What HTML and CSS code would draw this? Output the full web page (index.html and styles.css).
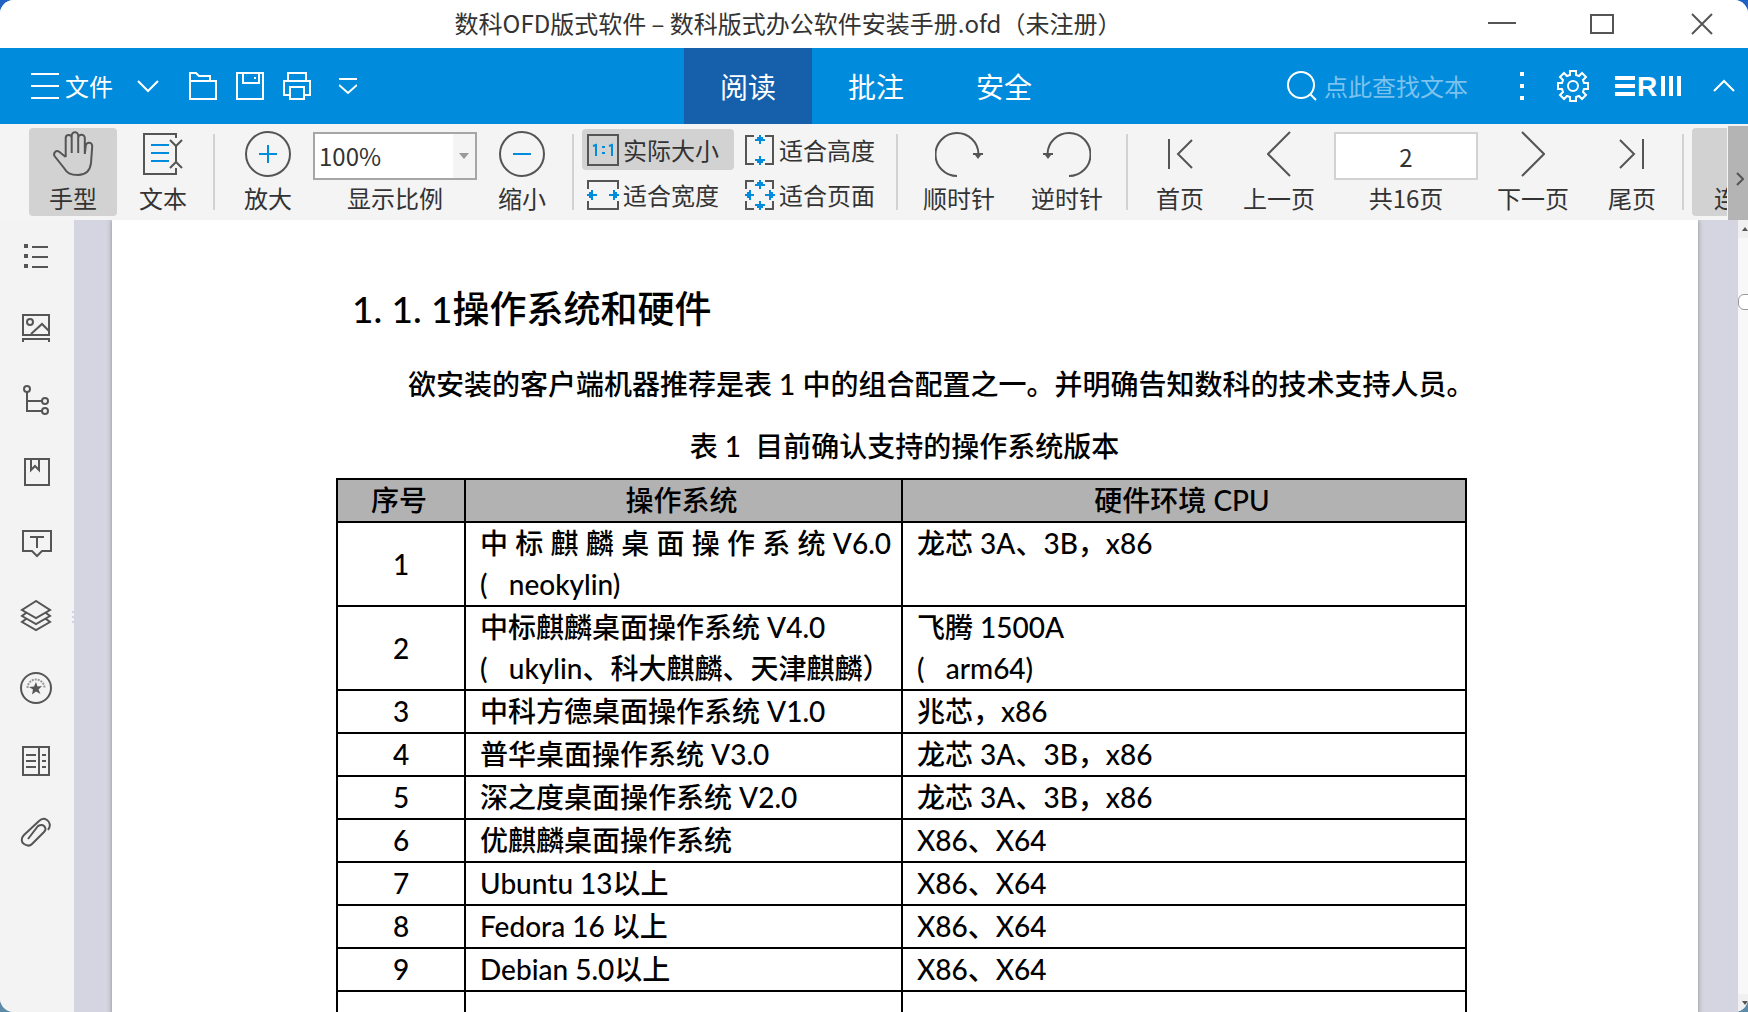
FILE: index.html
```html
<!DOCTYPE html>
<html lang="zh-CN">
<head>
<meta charset="utf-8">
<meta name="viewport" content="width=device-width, initial-scale=1">
<title>数科OFD版式软件</title>
<link rel="stylesheet" href="styles.css">
</head>
<body>
<div class="app">
  <header class="titlebar">
    <h1 class="window-title">数科OFD版式软件 – 数科版式办公软件安装手册.ofd（未注册）</h1>
    <div class="window-controls">
      <button class="icon-button" aria-label="最小化"><svg width="28" height="28"><path d="M0 13h28"/></svg></button>
      <button class="icon-button" aria-label="最大化"><svg width="28" height="28"><rect x="3" y="5" width="22" height="18"/></svg></button>
      <button class="icon-button" aria-label="关闭"><svg width="28" height="28"><path d="M4 4l20 20M24 4L4 24"/></svg></button>
    </div>
  </header>

  <nav class="menubar">
    <div class="quick">
      <button class="file-menu"><svg width="28" height="28"><path d="M0 2h28M0 14h28M0 26h28"/></svg>文件<svg class="file-chevron" width="22" height="14"><path d="M1 2l10 10L21 2"/></svg></button>
      <button class="icon-button" aria-label="打开"><svg width="28" height="28"><path d="M1 9V1h6l3 3h11v5M1 9h26v18H1z"/></svg></button>
      <button class="icon-button" aria-label="保存"><svg width="28" height="28"><path d="M1 1h26v26H1zM7 1v10h16V1M18 6h2"/></svg></button>
      <button class="icon-button" aria-label="打印"><svg width="28" height="28"><path d="M5 9V1h18v8M7 23H1V9h26v14h-6M7 15h14v12H7z"/></svg></button>
      <button class="icon-button more" aria-label="更多"><svg width="18" height="20"><path d="M0 3h18M0 9l9 8 9-8"/></svg></button>
    </div>
    <div class="tabs">
      <button class="tab tab-active">阅读</button>
      <button class="tab">批注</button>
      <button class="tab">安全</button>
    </div>
    <div class="menu-end">
      <label class="search"><svg width="32" height="32"><circle cx="15" cy="15" r="13"/><path d="M24 24l6 6"/></svg><input class="search-input" type="text" placeholder="点此查找文本" aria-label="点此查找文本"></label>
      <button class="icon-button dots" aria-label="菜单"><svg width="4" height="28"><path class="fill" d="M0 0h4v4H0zM0 12h4v4H0zM0 24h4v4H0z"/></svg></button>
      <button class="icon-button gear" aria-label="设置"><svg width="32" height="32"><path d="M13 1h6v4l3 1 3-3 4 4-3 3 1 3h4v6h-4l-1 3 3 3-4 4-3-3-3 1v4h-6v-4l-3-1-3 3-4-4 3-3-1-3H1v-6h4l1-3-3-3 4-4 3 3 3-1z"/><circle cx="16" cy="16" r="5"/></svg></button>
      <svg class="brand" width="66" height="20"><path class="fill" d="M0 0h20v4H0zM0 8h20v4H0zM0 16h20v4H0zM46 0h4v20h-4zM54 0h4v20h-4zM62 0h4v20h-4z"/><text class="brand-letter" x="22" y="20">R</text></svg>
      <button class="icon-button collapse" aria-label="折叠"><svg width="22" height="14"><path d="M1 12L11 2l10 10"/></svg></button>
    </div>
  </nav>

  <div class="ribbon">
    <div class="ribbon-body">
      <div class="group">
        <button class="tool tool-active"><span class="tool-icon"><svg width="44" height="48"><path d="M14.7 27V8a3 3 0 0 1 6 0v15M20.7 8V5.500a3.200 3.200 0 0 1 6.500 0V23M27.200 8a3.300 3.300 0 0 1 6.600 0v16M33.800 24l1-8.500a3.200 3.200 0 0 1 6.400 1L40 33c-1 8-6 12-13 12-8 0-11-2-14-7L3.500 26c-1.500-3 1.500-6.500 5-4l6.200 5"/></svg></span>手型</button>
        <button class="tool"><span class="tool-icon"><svg width="40" height="44"><path d="M33 6V2H1v40h32v-6M27 8l6 6 6-6M33 14v16M27 36l6-6 6 6"/><path class="accent" d="M8 13h18M8 21h18M8 29h18"/></svg></span>文本</button>
      </div>
      <span class="sep"></span>
      <div class="group group-zoom">
        <button class="tool"><span class="tool-icon"><svg width="46" height="46"><circle cx="23" cy="23" r="22"/><path class="accent" d="M14 23h18M23 14v18"/></svg></span>放大</button>
        <div class="field">
          <div class="combo"><input id="scale" class="combo-input" type="text" value="100%"><button class="combo-button" aria-label="选择比例"><svg width="10" height="6"><path class="fill" d="M0 0h10L5 6z"/></svg></button></div>
          <label for="scale">显示比例</label>
        </div>
        <button class="tool"><span class="tool-icon"><svg width="46" height="46"><circle cx="23" cy="23" r="22"/><path class="accent" d="M14 23h18"/></svg></span>缩小</button>
      </div>
      <span class="sep"></span>
      <div class="fit">
        <button class="fit-button tool-active"><svg width="32" height="32"><rect x="1" y="1" width="30" height="30"/><path class="accent" d="M6 12l3-1v11M22 12l3-1v11M15 13h3M15 19h3"/></svg>实际大小</button>
        <button class="fit-button"><svg width="32" height="32"><path d="M11 2H3v28h8M22 2h8v28h-8"/><path class="accent" d="M17 1v9M17 22v9M12 6h10M12 26h10M14 4h6M14 28h6"/></svg>适合高度</button>
        <button class="fit-button"><svg width="32" height="32"><path d="M1 10V2h30v8M1 22v8h30v-8"/><path class="accent" d="M0 16h10M22 16h10M5 11v10M27 11v10M3 13v6M29 13v6"/></svg>适合宽度</button>
        <button class="fit-button"><svg width="32" height="32"><path d="M11 2H3v8M22 2h8v8M3 22v8h8M30 22v8h-8"/><path class="accent" d="M17 1v9M17 22v9M12 6h10M12 26h10M14 4h6M14 28h6M2 16h9M22 16h10M7 11v10M27 11v10M5 13v6M29 13v6"/></svg>适合页面</button>
      </div>
      <span class="sep"></span>
      <div class="group">
        <button class="tool tool-wide"><span class="tool-icon"><svg width="48" height="46"><path d="M22 45A21.500 21.500 0 1 1 43.500 23"/><path class="fill" d="M38 22h10v2h-2l-3 4-3-4h-2z"/></svg></span>顺时针</button>
        <button class="tool tool-wide"><span class="tool-icon"><svg width="48" height="46"><path d="M26 45A21.500 21.500 0 1 0 4.500 23"/><path class="fill" d="M0 22h10v2H8l-3 4-3-4H0z"/></svg></span>逆时针</button>
      </div>
      <span class="sep"></span>
      <div class="group group-pages">
        <button class="tool"><span class="tool-icon"><svg width="26" height="32"><path d="M2 1v30M25 2L11 16l14 14"/></svg></span>首页</button>
        <button class="tool"><span class="tool-icon"><svg width="24" height="46"><path d="M23 1L1 23l22 22"/></svg></span>上一页</button>
        <div class="field">
          <input id="page" class="page-input" type="text" value="2">
          <label for="page">共16页</label>
        </div>
        <button class="tool"><span class="tool-icon"><svg width="24" height="46"><path d="M1 1l22 22L1 45"/></svg></span>下一页</button>
        <button class="tool"><span class="tool-icon"><svg width="26" height="32"><path d="M24 1v30M1 2l14 14L1 30"/></svg></span>尾页</button>
      </div>
      <span class="sep"></span>
      <button class="tool tool-active tool-last"><span class="tool-icon"></span>连续页</button>
    </div>
    <button class="ribbon-next" aria-label="更多工具"><svg width="8" height="14"><path d="M1 1l6 6-6 6"/></svg></button>
  </div>

  <div class="workspace">
    <aside class="sidebar">
      <button class="side-button" aria-label="大纲"><svg width="32" height="32"><path class="fill" d="M4 4h4v4H4zM4 14h4v4H4zM4 24h4v4H4z"/><path d="M12 7h16M12 17h16M12 27h16"/></svg></button>
      <button class="side-button" aria-label="缩略图"><svg width="32" height="32"><path d="M3 3h26v20H3zM3 30v-3h26v3M11 22l11-10 7 7"/><circle cx="10" cy="10" r="3"/></svg></button>
      <button class="side-button" aria-label="结构"><svg width="32" height="32"><circle cx="7" cy="5" r="3"/><circle cx="25" cy="17" r="3"/><circle cx="25" cy="27" r="3"/><path d="M7 8v19h15M7 17h15"/></svg></button>
      <button class="side-button" aria-label="书签"><svg width="32" height="32"><path d="M5 3h24v26H5zM11 3v11l4-4 4 4V3"/></svg></button>
      <button class="side-button" aria-label="批注"><svg width="32" height="32"><path d="M3 3h28v20h-9l-5 5-5-5H3zM10 9h14M17 9v11"/></svg></button>
      <button class="side-button" aria-label="图层"><svg width="32" height="32"><path d="M16 1L2 10l14 8 14-8zM6 13l-4 3 14 8 14-8-4-3M6 19l-4 3 14 8 14-8-4-3"/></svg></button>
      <button class="side-button" aria-label="签章"><svg width="32" height="32"><circle cx="16" cy="16" r="15"/><path class="fill" d="M16 10l1.500 4.500 4.500-.5-3.500 3.500 2 4.500-4.500-2.500-4 3 1-5-4-2.500 5-.5z"/><path class="seal" d="M7.500 16a8.500 8.500 0 0 1 17 0"/></svg></button>
      <button class="side-button" aria-label="目录"><svg width="32" height="32"><path d="M3 3h26v28H3zM19 3v28M6 11h10M6 17h10M6 23h10M22 11h4M22 17h4M22 23h4"/></svg></button>
      <button class="side-button" aria-label="附件"><svg width="32" height="32"><path d="M28 14c3-4 2-8-1-10s-6-1-8 1L4 19c-3 3-3 7 0 9s6 2 8 0l12-12c2-2 2-4 0-6s-4-1-6 0L8 23"/></svg></button>
      <svg class="splitter" width="2" height="12"><path d="M0 1h2M0 6h2M0 11h2"/></svg>
    </aside>
    <main class="canvas">
      <article class="page">
        <h2 class="heading">1. 1. 1操作系统和硬件</h2>
        <p class="para">欲安装的客户端机器推荐是表 1 中的组合配置之一。并明确告知数科的技术支持人员。</p>
        <table class="systems">
          <caption>表 1&nbsp; 目前确认支持的操作系统版本</caption>
          <colgroup><col class="col-no"><col class="col-os"><col></colgroup>
          <thead><tr><th>序号</th><th>操作系统</th><th>硬件环境 CPU</th></tr></thead>
          <tbody>
            <tr class="thin"><td>1</td><td><div class="spread">中 标 麒 麟 桌 面 操 作 系 统 V6.0</div>(&nbsp;&nbsp; neokylin)</td><td>龙芯 3A、3B，x86</td></tr>
            <tr class="thin"><td>2</td><td>中标麒麟桌面操作系统 V4.0<br>(&nbsp;&nbsp; ukylin、科大麒麟、天津麒麟）</td><td>飞腾 1500A<br>(&nbsp;&nbsp; arm64)</td></tr>
            <tr class="thin"><td>3</td><td>中科方德桌面操作系统 V1.0</td><td>兆芯，x86</td></tr>
            <tr><td>4</td><td>普华桌面操作系统 V3.0</td><td>龙芯 3A、3B，x86</td></tr>
            <tr><td>5</td><td>深之度桌面操作系统 V2.0</td><td>龙芯 3A、3B，x86</td></tr>
            <tr><td>6</td><td>优麒麟桌面操作系统</td><td>X86、X64</td></tr>
            <tr><td>7</td><td>Ubuntu 13以上</td><td>X86、X64</td></tr>
            <tr><td>8</td><td>Fedora 16 以上</td><td>X86、X64</td></tr>
            <tr><td>9</td><td>Debian 5.0以上</td><td>X86、X64</td></tr>
            <tr><td></td><td></td><td></td></tr>
          </tbody>
        </table>
      </article>
    </main>
    <div class="scrollbar">
      <button class="scroll-end" aria-label="向上"><svg width="6" height="4"><path class="fill" d="M0 4h6L3 0z"/></svg></button>
      <div class="scroll-track"><div class="scroll-thumb"></div></div>
      <button class="scroll-end" aria-label="向下"><svg width="6" height="4"><path class="fill" d="M0 0h6L3 4z"/></svg></button>
    </div>
  </div>
</div>
</body>
</html>
```

FILE: styles.css
```css
* { box-sizing: border-box; }

body {
  margin: 0;
  background: linear-gradient(#1f62c4, #5b8ba8);
  color: #333;
  font: 24px/36px "Noto Sans CJK SC", sans-serif;
}

button {
  padding: 0;
  border: 0;
  background: none;
  color: inherit;
  font: inherit;
  white-space: nowrap;
}

input {
  min-width: 0;
  border: 0;
  outline: 0;
  padding: 0;
  background: none;
  color: inherit;
  font: inherit;
}

svg {
  display: block;
  flex: none;
  fill: none;
  stroke: #555;
  stroke-width: 2;
}

.fill { fill: #555; stroke: none; }
.accent { stroke: #008bdc; }

.icon-button {
  display: flex;
  align-items: center;
  justify-content: center;
}

.app {
  display: flex;
  flex-direction: column;
  height: 100vh;
  overflow: hidden;
  border-radius: 14px;
  background: #f4f4f4;
}

/* Title bar */
.titlebar {
  display: grid;
  grid-template-columns: 1fr auto;
  flex: none;
  align-items: center;
  height: 48px;
  padding: 0 32px 0 88px;
  background: #fff;
}

.window-title {
  margin: 0;
  padding-bottom: 2px;
  font-size: 24px;
  font-weight: 400;
  text-align: center;
}

.window-controls {
  display: flex;
  justify-content: flex-end;
  gap: 72px;
}

/* Blue menu bar */
.menubar {
  display: grid;
  grid-template-columns: 1fr auto 1fr;
  flex: none;
  height: 76px;
  padding-left: 4px;
  background: #008bdc;
  color: #fff;
}

.menubar svg { stroke: #fff; }
.menubar .fill { fill: #fff; stroke: none; }

.quick {
  display: flex;
  align-items: center;
  gap: 19px;
  padding-left: 27px;
}

.file-menu {
  display: flex;
  align-items: center;
  gap: 6px;
  margin-right: 11px;
}

.file-chevron { margin-left: 18px; }
.more { margin-left: 9px; }

.tabs { display: flex; }
.tab { width: 128px; font-size: 28px; }
.tab-active { background: #1660ab; }

.menu-end {
  display: flex;
  align-items: center;
  justify-content: flex-end;
  padding-right: 13px;
}

.search { display: flex; align-items: center; gap: 6px; }
.search-input { width: 160px; }
.search-input::placeholder { color: #7cc2ee; opacity: 1; }
.dots { margin-left: 36px; }
.gear { margin-left: 33px; }
.brand { margin-left: 26px; overflow: visible; }
.brand-letter { fill: #fff; stroke: none; font: bold 28px "Liberation Sans", sans-serif; }
.collapse { margin-left: 32px; }

/* Ribbon */
.ribbon {
  display: flex;
  flex: none;
  height: 96px;
}

.ribbon-body {
  display: flex;
  flex: 1;
  min-width: 0;
  overflow: hidden;
  padding: 4px 0 4px 29px;
}

.group { display: flex; flex: none; gap: 2px; }
.group-zoom { gap: 1px; padding-left: 1px; }
.group-pages { gap: 11px; }

.sep {
  flex: none;
  width: 2px;
  margin: 6px 8px 6px 6px;
  background: #d2d2d2;
}

.tool { flex: none; width: 88px; height: 88px; border-radius: 4px; }
.tool-wide { width: 106px; }
.tool-last { width: 116px; }
.tool-active { background: #d2d2d2; }

.tool-icon {
  display: flex;
  align-items: center;
  justify-content: center;
  height: 52px;
}

.field {
  display: flex;
  flex-direction: column;
  align-items: center;
  padding-top: 4px;
}

.field label { white-space: nowrap; }

.combo {
  display: flex;
  flex: none;
  width: 164px;
  height: 48px;
  border: 2px solid #a6a6a6;
  background: #fff;
}

.combo-input { flex: 1; padding-left: 4px; }

.combo-button {
  display: flex;
  align-items: center;
  justify-content: center;
  width: 22px;
  background: #f4f4f4;
}

.combo-button .fill { fill: #999; }

.page-input {
  flex: none;
  width: 144px;
  height: 48px;
  border: 2px solid #d2d2d2;
  background: #fff;
  text-align: center;
}

.fit {
  display: grid;
  grid-template-columns: 152px 152px;
  grid-template-rows: 41px 41px;
  flex: none;
  gap: 4px;
  padding-top: 1px;
}

.fit-button {
  display: flex;
  align-items: center;
  gap: 4px;
  padding-left: 5px;
  border-radius: 4px;
}

.ribbon-next {
  display: flex;
  align-items: center;
  justify-content: center;
  flex: none;
  width: 20px;
  margin: 2px 0 0 1px;
  padding: 12px 0 0 4px;
  background: #b4b4b4;
}

/* Workspace */
.workspace { display: flex; flex: 1; min-height: 0; }

.sidebar {
  position: relative;
  flex: none;
  width: 74px;
  background: #f3f3f3;
}

.side-button {
  display: flex;
  align-items: center;
  width: 100%;
  height: 72px;
  padding-left: 20px;
}

.seal { stroke: #999; stroke-dasharray: 2 1; }

.splitter { position: absolute; right: 0; top: 391px; stroke: #ccd6ea; }

.canvas {
  flex: 1;
  min-width: 0;
  overflow: hidden;
  padding: 0 40px 0 38px;
  background: #d5d5e1;
}

.page {
  min-height: 100%;
  padding: 61px 231px 0 224px;
  background: #fff;
  box-shadow: 0 0 5px #888;
  color: #000;
  font-family: Lato, "Noto Sans CJK SC", sans-serif;
  font-size: 28px;
  font-weight: 500;
  line-height: 42px;
}

.heading {
  margin: 0 0 26px 16px;
  font-size: 37px;
  font-weight: 500;
  line-height: 56px;
}

.para {
  margin: 0 0 20px 16px;
  text-indent: 2em;
  white-space: nowrap;
}

.systems {
  width: 100%;
  border-collapse: collapse;
  table-layout: fixed;
}

.systems caption { padding: 0 0 11px 6px; }
.col-no { width: 128px; }
.col-os { width: 437px; }

.systems th,
.systems td {
  height: 43px;
  padding: 0 10px 0 14px;
  border: 2px solid #000;
  font-weight: 500;
  line-height: 41px;
  text-align: left;
  vertical-align: top;
}

.systems .thin td { border-bottom-width: 1px; }

.systems th { padding: 0 4px 0 0; background: #b2b2b2; text-align: center; }

.systems td:first-child {
  padding: 0;
  text-align: center;
  vertical-align: middle;
}

.spread { text-align: justify; text-align-last: justify; }

/* Scroll bar */
.scrollbar {
  display: flex;
  flex-direction: column;
  flex: none;
  width: 10px;
  background: #f8f8f8;
}

.scroll-end {
  display: flex;
  align-items: center;
  justify-content: center;
  height: 18px;
  padding-left: 4px;
  background: #f0f0f0;
}

.scroll-track { flex: 1; padding-top: 56px; overflow: hidden; }

.scroll-thumb {
  width: 20px;
  height: 16px;
  border: 1px solid #999;
  border-radius: 6px;
  background: #fff;
}
```
